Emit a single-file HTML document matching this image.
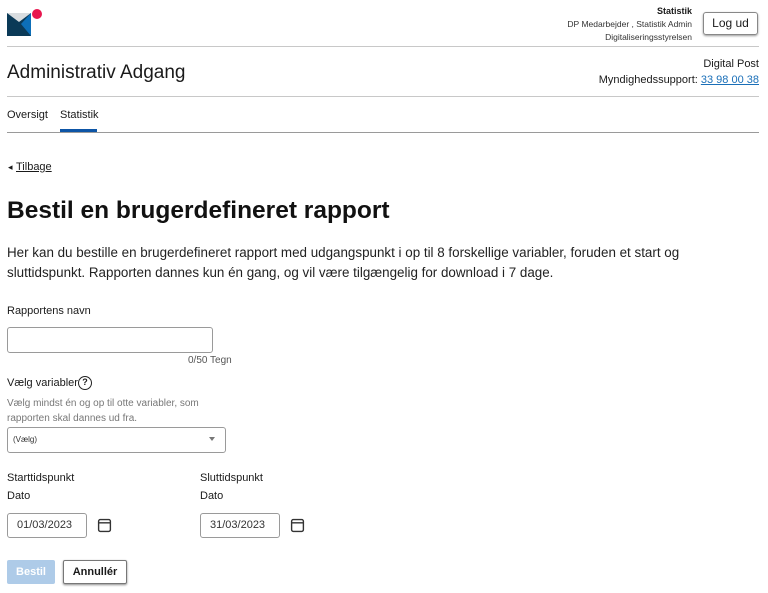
<!DOCTYPE html>
<html><head><meta charset="utf-8"><style>
*{margin:0;padding:0;box-sizing:border-box}
body{width:768px;height:593px;background:#fff;font-family:"Liberation Sans",Arial,sans-serif;color:#1a1a1a;position:relative;overflow:hidden}
.a{position:absolute;white-space:nowrap}
.hr{position:absolute;left:7px;right:9px;height:1px;background:#c8c8c8}
.box{position:absolute;border:1px solid #9a9a9a;border-radius:3px;background:#fff}
</style></head><body>
<svg class="a" style="left:7px;top:8px" width="42" height="30" viewBox="0 0 42 30">
<rect x="0" y="5" width="24" height="23" fill="#0b3a57"/>
<polygon points="0,5 24,5 12,14" fill="#d9dde0"/>
<polygon points="24,5 24,28 14,16" fill="#0d6fb8"/>
<circle cx="30" cy="6" r="5" fill="#e8174f"/>
</svg>
<div class="a" style="right:76px;top:6px;font-size:9px;font-weight:bold">Statistik</div>
<div class="a" style="right:76px;top:19px;font-size:8.5px;color:#333">DP Medarbejder , Statistik Admin</div>
<div class="a" style="right:76px;top:32px;font-size:8.5px;color:#333">Digitaliseringsstyrelsen</div>
<div class="a" style="left:703px;top:12px;width:55px;height:23px;border:1px solid #888;border-radius:3px;box-shadow:0 1px 2px #999;font-size:12px;text-align:center;line-height:21px">Log ud</div>
<div class="hr" style="top:46px"></div>
<div class="a" style="left:7px;top:62px;font-size:19px">Administrativ Adgang</div>
<div class="a" style="right:9px;top:58px;font-size:11px">Digital Post</div>
<div class="a" style="right:9px;top:74px;font-size:11px">Myndighedssupport: <span style="color:#1a6fb8;text-decoration:underline">33 98 00 38</span></div>
<div class="hr" style="top:96px"></div>
<div class="a" style="left:7px;top:109px;font-size:11px">Oversigt</div>
<div class="a" style="left:60px;top:109px;font-size:11px">Statistik</div>
<div class="a" style="left:60px;top:129px;width:37px;height:3px;background:#0d55a6"></div>
<div class="hr" style="top:132px;background:#9a9a9a"></div>
<div class="a" style="left:8px;top:162px;font-size:9px">&#9666;</div>
<div class="a" style="left:16px;top:161px;font-size:11px;text-decoration:underline">Tilbage</div>
<div class="a" style="left:7px;top:197px;font-size:24.5px;font-weight:bold;color:#111">Bestil en brugerdefineret rapport</div>
<div class="a" style="left:7px;top:243px;font-size:13.4px;line-height:20px;color:#222">Her kan du bestille en brugerdefineret rapport med udgangspunkt i op til 8 forskellige variabler, foruden et start og<br>sluttidspunkt. Rapporten dannes kun én gang, og vil være tilgængelig for download i 7 dage.</div>
<div class="a" style="left:7px;top:305px;font-size:11px">Rapportens navn</div>
<div class="box" style="left:7px;top:327px;width:206px;height:26px"></div>
<div class="a" style="left:188px;top:355px;font-size:10px;color:#555">0/50 Tegn</div>
<div class="a" style="left:7px;top:377px;font-size:11px">Vælg variabler</div>
<div class="a" style="left:78px;top:376px;width:14px;height:14px;border:1.5px solid #222;border-radius:50%;font-size:9px;font-weight:bold;text-align:center;line-height:11px">?</div>
<div class="a" style="left:7px;top:396px;font-size:10px;line-height:15px;color:#777">Vælg mindst én og op til otte variabler, som<br>rapporten skal dannes ud fra.</div>
<div class="box" style="left:7px;top:427px;width:219px;height:26px"></div>
<div class="a" style="left:13px;top:435px;font-size:8px;color:#333">(Vælg)</div>
<div class="a" style="left:209px;top:437px;width:0;height:0;border-left:3px solid transparent;border-right:3px solid transparent;border-top:4px solid #777"></div>
<div class="a" style="left:7px;top:472px;font-size:11px">Starttidspunkt</div>
<div class="a" style="left:200px;top:472px;font-size:11px">Sluttidspunkt</div>
<div class="a" style="left:7px;top:490px;font-size:11px">Dato</div>
<div class="a" style="left:200px;top:490px;font-size:11px">Dato</div>
<div class="box" style="left:7px;top:513px;width:80px;height:25px"></div>
<div class="a" style="left:17px;top:519px;font-size:11px;color:#333">01/03/2023</div>
<div class="box" style="left:200px;top:513px;width:80px;height:25px"></div>
<div class="a" style="left:210px;top:519px;font-size:11px;color:#333">31/03/2023</div>
<svg class="a" style="left:97px;top:518px" width="15" height="15" viewBox="0 0 14 14"><rect x="1.5" y="1.5" width="11" height="11" rx="1.5" fill="none" stroke="#333" stroke-width="1.3"/><line x1="1.5" y1="4.5" x2="12.5" y2="4.5" stroke="#333" stroke-width="1.3"/></svg>
<svg class="a" style="left:290px;top:518px" width="15" height="15" viewBox="0 0 14 14"><rect x="1.5" y="1.5" width="11" height="11" rx="1.5" fill="none" stroke="#333" stroke-width="1.3"/><line x1="1.5" y1="4.5" x2="12.5" y2="4.5" stroke="#333" stroke-width="1.3"/></svg>
<div class="a" style="left:7px;top:560px;width:48px;height:24px;background:#aecbe8;border-radius:2px;color:#fff;font-size:11px;font-weight:bold;text-align:center;line-height:24px">Bestil</div>
<div class="a" style="left:63px;top:560px;width:64px;height:24px;border:1px solid #777;border-radius:2px;box-shadow:0 1px 2px #888;font-size:11px;font-weight:bold;text-align:center;line-height:22px">Annullér</div>
</body></html>
